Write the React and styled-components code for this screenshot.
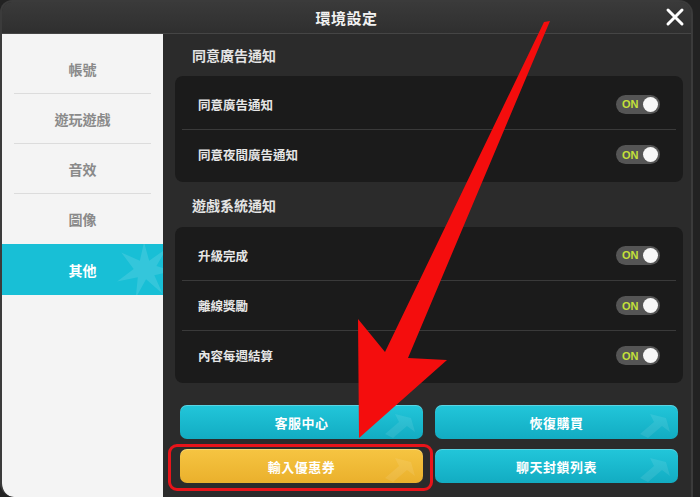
import React from 'react'
import styled, { createGlobalStyle } from 'styled-components'

const GlobalStyle = createGlobalStyle`
  html, body {
    margin: 0;
    padding: 0;
    background: #1f1f1f;
  }
  * { box-sizing: border-box; }
`

const FONT = `"Noto Sans CJK TC", "Noto Sans", "Liberation Sans", sans-serif`

const Screen = styled.div`
  position: relative;
  width: 700px;
  height: 497px;
  overflow: hidden;
  background: #222;
  font-family: ${FONT};
`

const Frame = styled.div`
  width: 693px;
  height: 497px;
  display: flex;
  flex-direction: column;
  background: #2b2b2b;
  border: 2px solid #3b3b3b;
  border-bottom: none;
  border-radius: 12px 14px 0 14px;
  overflow: hidden;
`

const TitleBar = styled.div`
  position: relative;
  height: 32px;
  flex: none;
  display: flex;
  align-items: center;
  justify-content: center;
  background: linear-gradient(#3a3a3a, #2f2f2f);
  border-bottom: 1px solid #454545;
  color: #f2f2f2;
  font-size: 15px;
  font-weight: 700;
  letter-spacing: 0.5px;
`

const Close = styled.div`
  position: absolute;
  right: 6px;
  top: 5px;
  width: 20px;
  height: 20px;
`

const Body = styled.div`
  flex: 1;
  display: flex;
  min-height: 0;
`

const Sidebar = styled.div`
  width: 161px;
  flex: none;
  background: #f4f4f4;
  padding-top: 10px;
  border-radius: 0 0 0 12px;
`

const Tab = styled.div`
  position: relative;
  height: ${({ $active }) => ($active ? '51px' : '50px')};
  display: flex;
  align-items: center;
  justify-content: center;
  font-size: 14px;
  font-weight: 700;
  color: ${({ $active }) => ($active ? '#ffffff' : '#8a8a8a')};
  background: ${({ $active }) => ($active ? '#18bfd6' : 'transparent')};
  overflow: hidden;
  &::after {
    content: '';
    position: absolute;
    left: 12px;
    right: 12px;
    bottom: 0;
    height: 1px;
    background: ${({ $last }) => ($last ? 'transparent' : '#dcdcdc')};
  }
  svg {
    position: absolute;
    right: -12px;
    top: -6px;
  }
`

const Content = styled.div`
  flex: 1;
  padding: 0 8px 0 12px;
  display: flex;
  flex-direction: column;
`

const SectionTitle = styled.div`
  height: ${({ $h }) => $h}px;
  display: flex;
  align-items: center;
  padding-left: 17px;
  color: #e4e4e4;
  font-size: 14px;
  font-weight: 700;
`

const Card = styled.div`
  background: #1b1b1b;
  border-radius: 8px;
  padding: 3px 7px 3px;
`

const Row = styled.div`
  height: 50px;
  display: flex;
  align-items: center;
  justify-content: space-between;
  padding: 0 16px 0 16px;
  color: #e6e6e6;
  font-size: 12.5px;
  font-weight: 700;
  & + & {
    border-top: 1px solid #3a3a3a;
  }
`

const Toggle = styled.div`
  width: 44px;
  height: 19px;
  border-radius: 10px;
  background: #555;
  display: flex;
  align-items: center;
  justify-content: space-between;
  padding: 0 2px 0 6px;
  font-family: "Liberation Sans", sans-serif;
  font-size: 11px;
  font-weight: 700;
  color: #c4e03a;
  &::after {
    content: '';
    width: 15px;
    height: 15px;
    border-radius: 50%;
    background: #f7f7f7;
  }
`

const Buttons = styled.div`
  margin-top: 22px;
  padding: 0 5px;
  display: grid;
  grid-template-columns: 1fr 1fr;
  column-gap: 12px;
  row-gap: 10px;
`

const Button = styled.div`
  position: relative;
  height: 34px;
  border-radius: 7px;
  display: flex;
  align-items: center;
  justify-content: center;
  overflow: hidden;
  color: #ffffff;
  font-size: 13px;
  font-weight: 700;
  letter-spacing: 0.5px;
  background: ${({ $yellow }) =>
    $yellow
      ? 'linear-gradient(#f6c542, #eab02c)'
      : 'linear-gradient(#22c6da, #12acc2)'};
  box-shadow: inset 0 1px 0 rgba(255, 255, 255, 0.25);
  svg {
    position: absolute;
    right: 6px;
    top: 3px;
  }
`

const Highlight = styled.div`
  position: absolute;
  left: 168px;
  top: 444px;
  width: 265px;
  height: 47px;
  border: 3px solid #e8141a;
  border-radius: 9px;
  pointer-events: none;
`

const Overlay = styled.svg`
  position: absolute;
  left: 0;
  top: 0;
  pointer-events: none;
`

const Leaf = ({ size = 54, opacity = 0.22 }) => (
  <svg width={size} height={size} viewBox="0 0 60 60">
    <path
      d="M30 4 L35 22 L52 10 L42 27 L58 32 L40 36 L48 54 L32 40 L22 58 L24 38 L4 42 L20 30 L8 14 L26 22 Z"
      fill="#ffffff"
      opacity={opacity}
    />
  </svg>
)

const ButtonMark = () => (
  <svg width="36" height="30" viewBox="0 0 36 30">
    <path
      d="M4 26 L18 14 L14 6 L30 10 L34 24 L26 18 L12 30 Z"
      fill="#ffffff"
      opacity="0.09"
    />
  </svg>
)

const tabs = ['帳號', '遊玩遊戲', '音效', '圖像', '其他']

const adRows = ['同意廣告通知', '同意夜間廣告通知']
const gameRows = ['升級完成', '離線獎勵', '內容每週結算']

const buttons = [
  { label: '客服中心' },
  { label: '恢復購買' },
  { label: '輸入優惠券', yellow: true },
  { label: '聊天封鎖列表' },
]

export default function App() {
  return (
    <Screen>
      <GlobalStyle />
      <Frame>
        <TitleBar>
          環境設定
          <Close>
            <svg width="20" height="20" viewBox="0 0 20 20">
              <path d="M3 3 L17 17 M17 3 L3 17" stroke="#fff" strokeWidth="3" strokeLinecap="round" />
            </svg>
          </Close>
        </TitleBar>
        <Body>
          <Sidebar>
            {tabs.map((t, i) => (
              <Tab key={t} $active={t === '其他'} $last={i >= 3}>
                {t}
                {t === '其他' && <Leaf size={62} opacity={0.12} />}
              </Tab>
            ))}
          </Sidebar>
          <Content>
            <SectionTitle $h={42}>同意廣告通知</SectionTitle>
            <Card>
              {adRows.map((r) => (
                <Row key={r}>
                  {r}
                  <Toggle>ON</Toggle>
                </Row>
              ))}
            </Card>
            <SectionTitle $h={45}>遊戲系統通知</SectionTitle>
            <Card>
              {gameRows.map((r) => (
                <Row key={r}>
                  {r}
                  <Toggle>ON</Toggle>
                </Row>
              ))}
            </Card>
            <Buttons>
              {buttons.map((b) => (
                <Button key={b.label} $yellow={b.yellow}>
                  {b.label}
                  <ButtonMark />
                </Button>
              ))}
            </Buttons>
          </Content>
        </Body>
      </Frame>
      <Highlight />
      <Overlay width="700" height="497" viewBox="0 0 700 497">
        <polygon
          points="544,22 550,21 408,358 447,360 359,438 358,319 385,352"
          fill="#f40d0d"
        />
      </Overlay>
    </Screen>
  )
}
